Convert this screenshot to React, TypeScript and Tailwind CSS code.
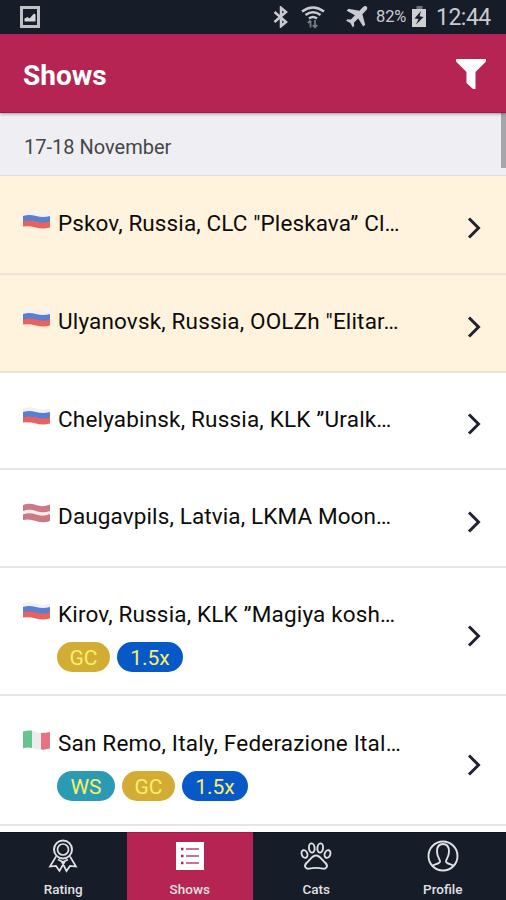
import type { ReactNode } from "react";
import clsx from "clsx";

type Country = "ru" | "lv" | "it";
type Tag = "WS" | "GC" | "1.5x";

interface Show {
  country: Country;
  title: string;
  tracking: string;
  height: string;
  highlighted?: boolean;
  tags?: Tag[];
}

const shows: Show[] = [
  { country: "ru", title: 'Pskov, Russia, CLC "Pleskava” Cl…', tracking: "tracking-[0.11px]", height: "h-[99px]", highlighted: true },
  { country: "ru", title: 'Ulyanovsk, Russia, OOLZh "Elitar…', tracking: "tracking-[0.16px]", height: "h-[98px]", highlighted: true },
  { country: "ru", title: "Chelyabinsk, Russia, KLK ”Uralk…", tracking: "tracking-[0.18px]", height: "h-[97px]" },
  { country: "lv", title: "Daugavpils, Latvia, LKMA Moon…", tracking: "tracking-[0.12px]", height: "h-[98px]" },
  { country: "ru", title: "Kirov, Russia, KLK ”Magiya kosh…", tracking: "tracking-[0.16px]", height: "h-[128px]", tags: ["GC", "1.5x"] },
  { country: "it", title: "San Remo, Italy, Federazione Ital…", tracking: "tracking-[0.19px]", height: "h-[130px]", tags: ["WS", "GC", "1.5x"] },
];

const tagStyles: Record<Tag, string> = {
  WS: "w-[58px] bg-[#2b9bb3]",
  GC: "w-[53px] bg-[#d3ac33]",
  "1.5x": "w-[66px] bg-[#0659c7]",
};

const Flag = ({ country }: { country: Country }) => {
  if (country === "it") {
    return (
      <svg viewBox="0 0 28 20" className="-mt-[6px] h-5 w-7 shrink-0">
        <path d="M0 1.5Q5 0 9 .5V18Q4 17 0 18.5z" fill="#67c48d" />
        <path d="M9 .5Q14 3 18 3V19.5Q13 19.500 9 18z" fill="#ececec" />
        <path d="M18 3Q23 3 27 2V18.500Q22 20 18 19.500z" fill="#e57384" />
      </svg>
    );
  }
  if (country === "lv") {
    return (
      <svg viewBox="0 0 28 20" className="-mt-[7px] h-5 w-7 shrink-0">
        <path d="M0 2Q6 -.5 13 2T27 1.500V18Q20 20.500 13 18T0 17z" fill="#f6eeef" />
        <path d="M0 2Q6 -.5 13 2T27 1.500V8Q20 10.500 13 8T0 8z" fill="#cf7885" />
        <path d="M0 11.500Q6 9 13 11.500T27 11V18Q20 20.500 13 18T0 17z" fill="#cf7885" />
      </svg>
    );
  }
  return (
    <svg viewBox="0 0 28 20" className="-mt-[6px] h-5 w-7 shrink-0">
      <path d="M0 2.500Q6 0 13 2.500T27 2V9H0z" fill="#f1f1f2" />
      <path d="M0 6Q6 4 13 6T27 6V13.500H0z" fill="#587fd0" />
      <path d="M0 11.500Q6 9.500 13 11.500T27 11.500V17.500Q20 19.500 13 17.500T0 16.500z" fill="#e9625f" />
    </svg>
  );
};

const StatusBar = () => (
  <div className="flex h-[34px] items-center bg-[#171c29] pr-[14px] pl-5 text-[#c9cbd0]">
    <svg viewBox="0 0 20 22" className="h-[22px] w-5 shrink-0" fill="none">
      <path d="M1.500 1.500h17v19h-17z" stroke="#bfc1c5" strokeWidth="3" />
      <path d="M4.500 15.500v-3l3-1.500 2 1.500 4.500-5 1.500 1v7z" fill="#d5d6d9" />
    </svg>
    <svg viewBox="0 0 16 22" className="ml-[233px] h-[22px] w-4 shrink-0" fill="none" stroke="currentColor" strokeWidth="2.500">
      <path d="M1.500 6l11.500 10-5 4.200V1.800l5 4.200L1.500 16" />
    </svg>
    <svg viewBox="0 0 24 24" className="ml-[12px] h-6 w-6 shrink-0" fill="none" stroke="currentColor" strokeWidth="2.500">
      <path d="M1 6.500q11-8 22 0M4.500 10q7.500-5.500 15 0M8 13.500q4-3 8 0" />
      <path d="M9.500 22.500v-7M6.800 18l2.700-2.700M14 15v7M11.800 20l2.200 2.500 2.300-2.500" stroke="#777b83" strokeWidth="1.800" />
    </svg>
    <svg viewBox="0 0 22 22" className="ml-[21px] h-[22px] w-[22px] shrink-0" fill="currentColor">
      <path d="M20.500.5c1.200.8 1 2.500-.3 3.800l-3.800 4 2.800 10.500-2 1.700-5-8-4.300 4.200.3 3.200-1.500 1.300-2.300-4.300-4.200-2.200 1.200-1.500 3.500.2 4-4.200-8.200-4.500 1.700-2 11 2 3.700-3.700C18.200.1 19.500-.2 20.500.5z" />
    </svg>
    <span className="ml-2 w-[31px] text-[16.500px] leading-none tracking-[-0.1px] whitespace-nowrap">82%</span>
    <svg viewBox="0 0 16 22" className="ml-[4px] h-[22px] w-4 shrink-0">
      <path d="M5.500 0h6v3h-6z" fill="#6c7078" />
      <path d="M1 3h14v18H1z" fill="#cfd0d4" />
      <path d="M10 5L3.500 12.500l4 .5L5 18.500l7.500-7.500-4-.7z" fill="#171c29" />
    </svg>
    <span className="ml-[9px] text-[23px] leading-none tracking-[-0.5px] whitespace-nowrap">12:44</span>
  </div>
);

const ShowRow = ({ show }: { show: Show }) => (
  <li
    className={clsx(
      "flex items-center border-b-2 pr-[25px] pl-[23px]",
      show.height,
      show.tags ? "pt-[10px]" : "pt-[7px]",
      show.highlighted ? "border-[#ece4d6] bg-[#fff3de]" : "border-[#e6e6e6] bg-white"
    )}
  >
    <div className={clsx("flex-1", !show.tags && "pb-[11px]")}>
      <div className="flex h-7 items-center">
        <Flag country={show.country} />
        <span className={clsx("ml-[7px] text-[22.500px] leading-7 whitespace-nowrap text-[#0d0c0a]", show.tracking)}>
          {show.title}
        </span>
      </div>
      {show.tags && (
        <div className="mt-[14px] flex gap-[7px] pl-[34px]">
          {show.tags.map((tag) => (
            <span
              key={tag}
              className={clsx(
                "flex h-[30px] items-center justify-center rounded-full pt-[2px] text-[21px] leading-none text-[#f8ef6c]",
                tagStyles[tag]
              )}
            >
              {tag}
            </span>
          ))}
        </div>
      )}
    </div>
    <svg viewBox="0 0 14 22" className="h-[22px] w-[14px]" fill="none" stroke="#202231" strokeWidth="3">
      <path d="M2 1.500L11.500 11 2 20.500" />
    </svg>
  </li>
);

const NavItem = ({ label, active, children }: { label: string; active?: boolean; children: ReactNode }) => (
  <a
    className={clsx(
      "flex flex-1 flex-col items-center border-t pt-[6px] text-[#e0e1e4]",
      active ? "border-[#a3174a] bg-[#b62454]" : "border-[#0f1320] bg-[#171c29]"
    )}
  >
    {children}
    <span className="mt-[8px] text-[13.500px] leading-4 font-medium">{label}</span>
  </a>
);

const App = () => (
  <div className="flex h-[900px] w-[506px] flex-col overflow-hidden bg-white font-[Roboto,sans-serif]">
    <StatusBar />
    <header className="relative z-10 flex h-[79px] items-center justify-between border-b border-[#a51545] bg-[#b62454] pr-5 pl-[23px] text-white shadow-[0_1px_3px_rgba(0,0,0,0.35)]">
      <h1 className="pt-[5px] text-[28px] leading-none font-bold">Shows</h1>
      <svg viewBox="0 0 30 30" className="mt-[2px] h-[30px] w-[30px]" fill="currentColor">
        <path d="M0 0h30v2.500L19.500 13v17h-2.500L10.500 24V13L0 2.500z" />
      </svg>
    </header>
    <main className="relative flex-1 overflow-hidden">
      <h2 className="flex h-[63px] items-center border-b border-[#e1dfda] bg-[#eeeef3] pt-[6px] pl-6 text-[20px] text-[#454548]">
        17-18 November
      </h2>
      <ul>
        {shows.map((show) => (
          <ShowRow key={show.title} show={show} />
        ))}
      </ul>
      <div className="absolute top-0 right-0 h-[55px] w-[5px] bg-[#a6a6aa]" />
    </main>
    <nav className="flex h-[68px]">
      <NavItem label="Rating">
        <svg viewBox="0 0 30 34" className="h-[34px] w-[30px]" fill="none" stroke="currentColor" strokeWidth="1.700">
          <circle cx="15" cy="10.500" r="9" strokeWidth="2" />
          <circle cx="15" cy="10.500" r="5.500" />
          <path d="M8 17.500L2 27.500l6-.5 3.500 5L17 22M22 17.500L28 27.500l-6-.5-3.500 5L13.500 22M10 20.500l5 2.500 5-2.500" />
        </svg>
      </NavItem>
      <NavItem label="Shows" active>
        <svg viewBox="0 0 30 34" className="h-[34px] w-[30px]" fill="none">
          <path d="M1 3h28v28H1z" fill="#fff" />
          <path d="M6 10h2.500M6 17h2.500M6 24h2.500" stroke="#b62454" strokeWidth="2.500" />
          <path d="M11 10h13M11 17h13M11 24h13" stroke="#cf7190" strokeWidth="1.800" />
        </svg>
      </NavItem>
      <NavItem label="Cats">
        <svg viewBox="0 0 32 34" className="h-[34px] w-8" fill="none" stroke="currentColor" strokeWidth="1.900">
          <ellipse cx="4.500" cy="15" rx="2.800" ry="4" transform="rotate(-20 4.500 15)" />
          <ellipse cx="11.800" cy="9" rx="2.800" ry="4.600" transform="rotate(-6 11.800 9)" />
          <ellipse cx="20.200" cy="9" rx="2.800" ry="4.600" transform="rotate(6 20.200 9)" />
          <ellipse cx="27.500" cy="15" rx="2.800" ry="4" transform="rotate(20 27.500 15)" />
          <path d="M16 16.500c4 0 5.500 4 9.500 7.500 3 3 1 6.300-2.500 5.600-5-1-9-1-14 0-3.500.7-5.500-2.600-2.500-5.600 4-3.500 5.500-7.500 9.500-7.500z" />
        </svg>
      </NavItem>
      <NavItem label="Profile">
        <svg viewBox="0 0 32 34" className="h-[34px] w-8" fill="none" stroke="currentColor" strokeWidth="1.900">
          <circle cx="16" cy="17" r="14.500" />
          <path d="M5.500 27c2-2 7-2 7.500-4.500.3-2-3-4-3-10C10 7.500 12.500 5 16 5s6 2.500 6 7.500c0 6-3.300 8-3 10 .5 2.500 5.500 2.500 7.500 4.500" />
        </svg>
      </NavItem>
    </nav>
  </div>
);

export default App;
